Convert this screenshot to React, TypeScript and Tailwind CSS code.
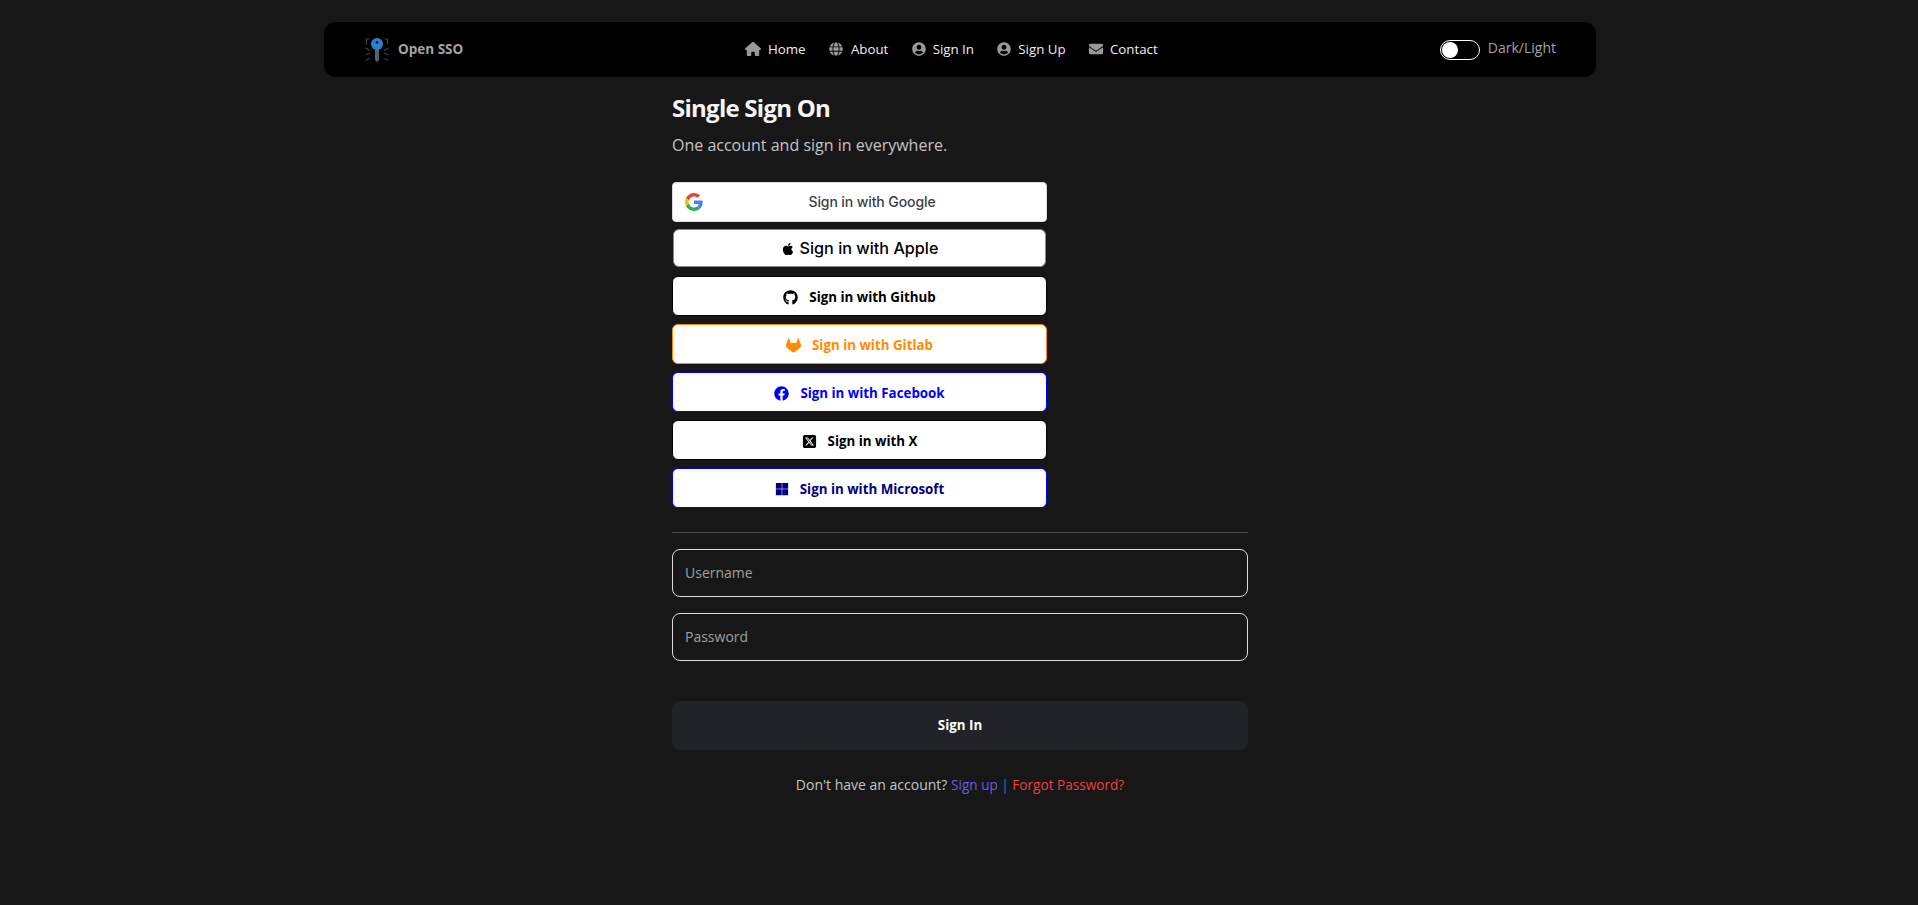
import type { ReactNode } from 'react';
import { FaApple, FaEnvelope, FaFacebook, FaGithub, FaGlobe, FaUserCircle } from 'react-icons/fa';
import { FaGitlab, FaHouse, FaMicrosoft, FaSquareXTwitter } from 'react-icons/fa6';

const NAV_LINKS = [
  { label: 'Home', icon: <FaHouse size={16} />, gap: 'gap-[7px]' },
  { label: 'About', icon: <FaGlobe size={14} />, gap: 'gap-[8px]' },
  { label: 'Sign In', icon: <FaUserCircle size={14} />, gap: 'gap-[7px]' },
  { label: 'Sign Up', icon: <FaUserCircle size={14} />, gap: 'gap-[7px]' },
  { label: 'Contact', icon: <FaEnvelope size={14} />, gap: 'gap-[7px]' },
];

function KeyLogo() {
  return (
    <svg width="24" height="24" viewBox="0 0 24 24" fill="none">
      <g stroke="#37424d" strokeWidth="1.2">
        <path d="M4.5 1 H1.5 V6.5" />
        <path d="M19.5 1 H22.5 V6.5" />
        <path d="M0.5 10 L5 12.5" />
        <path d="M23.5 10 L19 12.5" />
        <path d="M0.5 17 L5 15" />
        <path d="M23.5 17 L19 15" />
        <path d="M0.5 22.5 L4.5 20.5" />
        <path d="M23.5 22.5 L19.5 20.5" />
      </g>
      <path d="M10 10 H14 V22 L12 24 L10 22 Z" fill="#56616b" />
      <circle cx="12" cy="6" r="6" fill="#2583d1" />
      <circle cx="12" cy="4.5" r="1.4" fill="#0b1a26" />
    </svg>
  );
}

function GoogleLogo() {
  return (
    <svg width="18" height="18" viewBox="0 0 48 48" className="shrink-0">
      <path fill="#EA4335" d="M24 9.5c3.54 0 6.71 1.22 9.21 3.6l6.85-6.85C35.9 2.38 30.47 0 24 0 14.62 0 6.51 5.38 2.56 13.22l7.98 6.19C12.43 13.72 17.74 9.5 24 9.5z" />
      <path fill="#4285F4" d="M46.98 24.55c0-1.57-.15-3.09-.38-4.55H24v9.02h12.94c-.58 2.96-2.26 5.48-4.78 7.18l7.73 6c4.51-4.18 7.09-10.36 7.09-17.65z" />
      <path fill="#FBBC05" d="M10.53 28.59c-.48-1.45-.76-2.99-.76-4.59s.27-3.14.76-4.59l-7.98-6.19C.92 16.46 0 20.12 0 24c0 3.88.92 7.54 2.56 10.78l7.97-6.19z" />
      <path fill="#34A853" d="M24 48c6.48 0 11.93-2.13 15.89-5.81l-7.73-6c-2.15 1.45-4.92 2.3-8.16 2.3-6.26 0-11.57-4.22-13.47-9.91l-7.98 6.19C6.51 42.62 14.62 48 24 48z" />
    </svg>
  );
}

function ProviderButton({ icon, label, className }: { icon: ReactNode; label: string; className: string }) {
  return (
    <button className={`h-10 w-full rounded-md border bg-white pt-[2px] flex items-center justify-center gap-[11px] text-[13.33px] font-bold ${className}`}>
      {icon}
      <span className="pt-[1px]">{label}</span>
    </button>
  );
}

export default function App() {
  return (
    <div className="min-h-[905px] bg-[#171717] pt-[22px] pl-[2px] font-['Open_Sans',sans-serif] text-sm text-white">
      <nav className="mx-auto w-[1272px] h-[55px] rounded-xl bg-black flex items-center pl-[41px] pr-[40px]">
        <div className="w-[380px] flex items-center gap-[9px] text-[13.5px] font-bold text-[#a3a3a3]">
          <KeyLogo />
          Open SSO
        </div>
        <div className="flex gap-[23.3px] text-[13.3px]">
          {NAV_LINKS.map((link) => (
            <a key={link.label} className={`flex items-center text-[#eeeeee] ${link.gap}`}>
              <span className="text-[#999999]">{link.icon}</span>
              {link.label}
            </a>
          ))}
        </div>
        <div className="ml-auto flex items-center gap-[8px] text-[#a3a3a3]">
          <span className="w-[40px] h-[20px] rounded-full border border-white bg-black flex items-center pl-[1px]">
            <span className="w-[16px] h-[16px] rounded-full bg-white" />
          </span>
          <span className="-mt-[3px]">Dark/Light</span>
        </div>
      </nav>

      <main className="mx-auto w-[576px]">
        <h1 className="mt-[13px] text-2xl leading-[36px] font-bold tracking-[-0.75px] text-[#f5f5f5]">Single Sign On</h1>
        <p className="mt-[4px] text-base leading-[30px] text-[#c4c4c4]">One account and sign in everywhere.</p>

        <div className="mt-[22px] w-[375px] flex flex-col">
          <button className="h-10 rounded-[4px] bg-white flex items-center pl-[12px] border border-[#dadce0] font-['Inter',sans-serif] text-sm font-medium text-[#3c4043]">
            <GoogleLogo />
            <span className="flex-1 pr-[5px] text-center tracking-[-0.1px]">Sign in with Google</span>
          </button>
          <button className="mt-[7px] mx-[1px] h-[38px] rounded-md bg-white border border-[#8a8a8a] pt-[1px] flex items-center justify-center gap-[5px] font-['Inter',sans-serif] text-[16.2px] font-medium text-black">
            <FaApple size={14} />
            Sign in with Apple
          </button>
          <div className="mt-[9px] flex flex-col gap-[8px]">
            <ProviderButton icon={<FaGithub size={15} />} label="Sign in with Github" className="border-black text-black" />
            <ProviderButton icon={<FaGitlab size={15} />} label="Sign in with Gitlab" className="border-[#ff8c00] text-[#ff8c00]" />
            <ProviderButton icon={<FaFacebook size={15} />} label="Sign in with Facebook" className="border-[#0000ff] text-[#0000ff]" />
            <ProviderButton icon={<FaSquareXTwitter size={15} />} label="Sign in with X" className="border-black text-black" />
            <ProviderButton icon={<FaMicrosoft size={14} />} label="Sign in with Microsoft" className="border-[#0000ee] text-[#000080]" />
          </div>
        </div>

        <hr className="mt-[24px] border-t border-[#4d4d4d]" />

        <input
          placeholder="Username"
          className="mt-[16px] block w-full h-[48px] rounded-lg border border-[#dcdcdc] bg-transparent px-3 pb-[2px] text-sm outline-none placeholder:text-[#a0a0a0]"
        />
        <input
          placeholder="Password"
          type="password"
          className="mt-[16px] block w-full h-[48px] rounded-lg border border-[#dcdcdc] bg-transparent px-3 pb-[2px] text-sm outline-none placeholder:text-[#a0a0a0]"
        />

        <button className="mt-[40px] w-full h-[49px] rounded-lg bg-[#212329] pt-[1px] text-[13.33px] font-bold text-white">Sign In</button>

        <p className="mt-[25px] text-center text-sm leading-5 text-[#c4c4c4]">
          Don't have an account?{' '}
          <span className="text-[13.6px] font-medium">
            <a className="text-[#6a5ae0]">Sign up</a> <span className="text-[#4a6fc4]">|</span>{' '}
            <a className="text-[#f03e3e]">Forgot Password?</a>
          </span>
        </p>
      </main>
    </div>
  );
}
